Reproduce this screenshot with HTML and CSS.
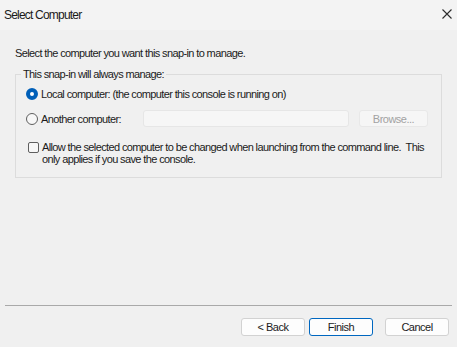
FILE: index.html
```html
<!DOCTYPE html>
<html lang="en">
<head>
    <meta charset="UTF-8">
    <meta name="viewport" content="width=device-width, initial-scale=1.0">
    <title>Select Computer</title>
    <link rel="stylesheet" href="styles.css">
</head>
<body>
    <div class="titlebar">
        <span class="title">Select Computer</span>
        <svg class="close-icon" width="10" height="10" viewBox="0 0 10 10">
            <path d="M0.5 0.5 L9.5 9.5 M9.5 0.5 L0.5 9.5" stroke="#2b2b2b" stroke-width="1.1" fill="none"/>
        </svg>
    </div>

    <div class="content">
        <p class="intro">Select the computer you want this snap-in to manage.</p>

        <fieldset class="group">
            <legend>This snap-in will always manage:</legend>

            <label class="option-row local-row">
                <input type="radio" name="target" checked>
                <span>Local computer: (the computer this console is running on)</span>
            </label>

            <div class="option-row another-row">
                <label class="another-label">
                    <input type="radio" name="target">
                    <span>Another computer:</span>
                </label>
                <input type="text" class="computer-name" disabled>
                <button class="browse-btn" disabled>Browse...</button>
            </div>

            <label class="check-row">
                <input type="checkbox">
                <span class="check-text">Allow the selected computer to be changed when launching from the command line.&nbsp; This<br>only applies if you save the console.</span>
            </label>
        </fieldset>
    </div>

    <div class="footer">
        <div class="separator"></div>
        <div class="buttons">
            <button class="btn">&lt; Back</button>
            <button class="btn btn-default">Finish</button>
            <button class="btn btn-cancel">Cancel</button>
        </div>
    </div>
</body>
</html>
```

FILE: styles.css
```css
* {
    margin: 0;
    padding: 0;
    box-sizing: border-box;
}

html, body {
    height: 100%;
}

body {
    font-family: 'Liberation Sans', Arial, sans-serif;
    font-size: 11px;
    letter-spacing: -0.62px;
    color: #1b1b1b;
    background: #f0f0f0;
    display: flex;
    flex-direction: column;
    overflow: hidden;
}

.titlebar {
    height: 30px;
    display: flex;
    align-items: center;
    justify-content: space-between;
    padding: 0 5px 0 4px;
    background: #f3f3f3;
}

.title {
    font-size: 12px;
    letter-spacing: -0.8px;
    color: #1a1a1a;
    line-height: 14px;
}

.close-icon {
    margin-top: -2px;
}

.content {
    padding: 0 15px;
}

.intro {
    margin-top: 16px;
    line-height: 14px;
}

.group {
    margin-top: 7px;
    border: 1px solid #dcdcdc;
    padding: 0 13px 10px 10px;
    height: 111px;
}

.group legend {
    margin-left: -5px;
    padding: 0 2px;
    line-height: 14px;
}

.option-row {
    display: flex;
    align-items: center;
    gap: 3px;
    line-height: 14px;
}

.local-row {
    margin-top: 6px;
}

.another-row {
    margin-top: 9px;
    gap: 0;
}

.another-label {
    display: flex;
    align-items: center;
    gap: 3px;
    width: 117px;
}

input[type="radio"] {
    appearance: none;
    width: 12px;
    height: 12px;
    border-radius: 50%;
    border: 1px solid #5f5f5f;
    background: #f7f7f7;
    flex-shrink: 0;
}

input[type="radio"]:checked {
    border: 4px solid #005fb8;
    background: #ffffff;
}

.computer-name {
    width: 206px;
    height: 17px;
    border: 1px solid #e6e6e6;
    border-radius: 3px;
    background: #f6f6f6;
}

.browse-btn {
    margin-left: 10px;
    width: 69px;
    height: 17px;
    border: 1px solid #e8e8e8;
    border-radius: 3px;
    background: #f6f6f6;
    color: #a2a2a2;
    font-family: inherit;
    font-size: 11px;
    letter-spacing: -0.5px;
}

.check-row {
    display: flex;
    align-items: flex-start;
    gap: 3px;
    margin-top: 14px;
    padding-left: 2px;
    line-height: 12px;
}

.check-text {
    white-space: nowrap;
}

input[type="checkbox"] {
    appearance: none;
    width: 11px;
    height: 11px;
    margin-top: 1px;
    border: 1px solid #5f5f5f;
    border-radius: 2px;
    background: #f7f7f7;
    flex-shrink: 0;
}

.footer {
    margin-top: auto;
}

.separator {
    margin: 0 5px;
    border-top: 1px solid #a9a9a9;
}

.buttons {
    display: flex;
    justify-content: flex-end;
    padding: 12px 8px 11px;
}

.btn {
    width: 64px;
    height: 18px;
    border: 1px solid #d2d2d2;
    border-radius: 3px;
    background: #fdfdfd;
    color: #1b1b1b;
    font-family: inherit;
    font-size: 11px;
    letter-spacing: -0.5px;
}

.btn-default {
    margin-left: 4px;
    border: 1px solid #0067c0;
}

.btn-cancel {
    margin-left: 12px;
}
```
